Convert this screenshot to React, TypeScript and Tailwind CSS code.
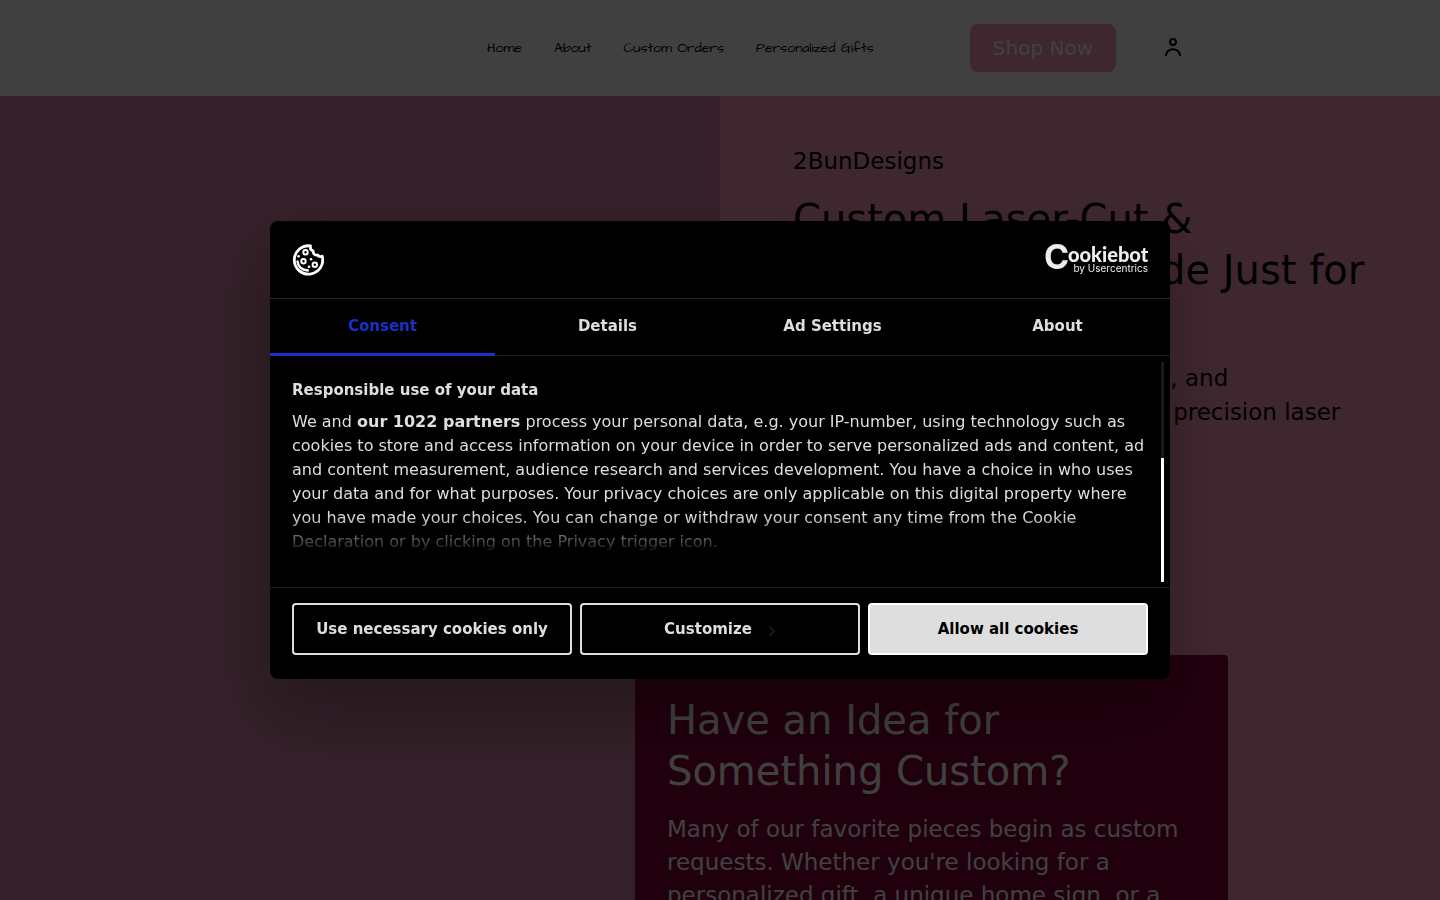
import { useState } from "react";

const navLinks = ["Home", "About", "Custom Orders", "Personalized Gifts"];
const tabs = ["Consent", "Details", "Ad Settings", "About"];

function UserIcon() {
  return (
    <svg className="h-6 w-6" viewBox="0 0 24 24" fill="none" stroke="currentColor" strokeWidth="2">
      <circle cx="12" cy="6" r="3" />
      <path d="M5 20c0-4 3.200-6.800 7-6.800s7 2.800 7 6.800" />
    </svg>
  );
}

function CookieIcon() {
  return (
    <svg className="h-8 w-8" viewBox="0 0 32 32" fill="none" stroke="#fff" strokeLinecap="round">
      <path
        d="M18.500 1.900A14.200 14.200 0 1 0 30.200 12.200c-1.700.9-3.600.3-4.400-1.200-2.700.6-5-1.300-4.600-3.900-2.200-.8-3.200-3-2.700-5.200Z"
        strokeWidth="2.800"
        strokeLinejoin="round"
      />
      <path d="M5.500 17.500c.6 5 4.600 8.600 10.400 9" strokeWidth="2.400" />
      <g strokeWidth="2">
        <circle cx="13.500" cy="8.300" r="2.200" />
        <circle cx="11.500" cy="17.200" r="2.200" />
        <circle cx="22.800" cy="20.800" r="2.200" />
      </g>
      <g fill="#fff" stroke="none">
        <circle cx="6.500" cy="12.300" r="1.300" />
        <circle cx="19" cy="15.200" r="1.300" />
        <circle cx="17" cy="22.800" r="1.300" />
      </g>
    </svg>
  );
}

function CookiebotLogo() {
  return (
    <svg className="h-8 w-[103px] overflow-visible" viewBox="0 0 103 32" fill="#eee" role="img" aria-label="Cookiebot by Usercentrics">
      <text x="-1" y="25">
        <tspan className="font-['Inter',sans-serif] text-[34px] font-bold">C</tspan>
        <tspan x="23" y="18" className="font-['Lato',sans-serif] text-[20px] font-black">
          ookiebot
        </tspan>
      </text>
      <text x="103" y="28" textAnchor="end" className="font-['Inter',sans-serif] text-[10px]">
        by Usercentrics
      </text>
    </svg>
  );
}

function SiteHeader() {
  return (
    <header className="flex h-24 items-center justify-end bg-white pr-[243px] text-black">
      <nav className="mr-24 flex gap-8 font-['Architects_Daughter',cursive] text-sm">
        {navLinks.map((label) => (
          <a key={label} href="#">
            {label}
          </a>
        ))}
      </nav>
      <a href="#" className="flex h-12 items-center rounded-lg bg-[#fc9cbc] px-[23px] text-xl text-white">
        Shop Now
      </a>
      <button type="button" aria-label="Account" className="ml-[33px] flex h-12 w-12 items-center justify-center">
        <UserIcon />
      </button>
    </header>
  );
}

function Hero() {
  return (
    <section>
      <div className="grid min-h-screen grid-cols-2">
        <div className="bg-[#cc80a0]" />
        <div className="bg-[#fc9cbc] pt-12 pl-[73px] text-black">
          <p className="text-[23px] leading-[34px]">2BunDesigns</p>
          <h1 className="mt-4 text-[40px] leading-[51px]">
            Custom Laser-Cut &amp;
            <br />
            Engraved Gifts Made Just for
            <br />
            You
          </h1>
          <p className="mt-[14px] text-[23px] leading-[34px]">
            Home decor, badges, ornaments, and
            <br />
            keepsakes, all hand-crafted with precision laser
          </p>
        </div>
      </div>
      <div className="-mt-[341px] flex justify-end pr-[212px]">
        <article className="w-[593px] rounded bg-[#800034] px-8 pt-10 pb-12 text-white">
          <h2 className="text-[40px] leading-[51px]">
            Have an Idea for
            <br />
            Something Custom?
          </h2>
          <p className="mt-4 text-[23px] leading-[33px]">
            Many of our favorite pieces begin as custom
            <br />
            requests. Whether you&apos;re looking for a
            <br />
            personalized gift, a unique home sign, or a
          </p>
        </article>
      </div>
    </section>
  );
}

function ConsentDialog() {
  const [active, setActive] = useState(0);

  return (
    <div
      role="dialog"
      aria-label="Cookie consent"
      className="w-full max-w-[900px] overflow-hidden rounded-lg bg-black text-[15px] text-[#dedede] shadow-[0_32px_68px_rgba(0,0,0,0.3)]"
    >
      <div className="flex h-[78px] items-center justify-between border-b border-[#262626] px-[22px]">
        <CookieIcon />
        <CookiebotLogo />
      </div>

      {/* Tabs */}
      <div role="tablist" className="grid h-[57px] grid-cols-4 border-b border-[#1c1c1c]">
        {tabs.map((tab, i) => (
          <button
            key={tab}
            type="button"
            role="tab"
            aria-selected={i === active}
            onClick={() => setActive(i)}
            className={
              i === active
                ? "-mb-px border-b-3 border-[#1831cb] font-bold text-[#1831cb]"
                : "-mb-px border-b-3 border-transparent font-bold"
            }
          >
            {tab}
          </button>
        ))}
      </div>

      {/* Scrollable copy */}
      <div className="relative flex h-[231px] justify-between pt-[6px] pr-[6px] pb-[5px] pl-[22px]">
        <div className="pt-4 leading-6">
          <h2 className="mb-2 font-bold">Responsible use of your data</h2>
          <p className="text-base">
            We and <strong>our 1022 partners</strong> process your personal data, e.g. your IP-number, using technology such as
            <br />
            cookies to store and access information on your device in order to serve personalized ads and content, ad
            <br />
            and content measurement, audience research and services development. You have a choice in who uses
            <br />
            your data and for what purposes. Your privacy choices are only applicable on this digital property where
            <br />
            you have made your choices. You can change or withdraw your consent any time from the Cookie
            <br />
            Declaration or by clicking on the Privacy trigger icon.
          </p>
        </div>
        <div className="flex w-[3px] flex-col justify-end bg-[#1a1a1a]">
          <div className="h-[124px] bg-white" />
        </div>
        <div className="pointer-events-none absolute right-4 bottom-8 left-0 h-10 bg-linear-to-t from-black to-transparent" />
      </div>

      <div className="grid grid-cols-3 gap-2 border-t border-[#1c1c1c] px-[22px] pt-[15px] pb-6">
        <button type="button" className="h-[52px] rounded border-2 border-[#dedede] font-bold">
          Use necessary cookies only
        </button>
        <button type="button" className="flex h-[52px] items-center justify-center gap-4 rounded border-2 border-[#dedede] font-bold">
          Customize
          <svg className="mt-1 h-3 w-2" viewBox="0 0 8 12" fill="none" stroke="#1a1a1a" strokeWidth="2">
            <path d="M1.500 1.500 6 6l-4.500 4.500" />
          </svg>
        </button>
        <button type="button" className="h-[52px] rounded border-2 border-white bg-[#dedede] font-bold text-black">
          Allow all cookies
        </button>
      </div>
    </div>
  );
}

export default function App() {
  return (
    <div className="h-screen overflow-hidden font-['DejaVu_Sans',sans-serif]">
      <SiteHeader />
      <Hero />
      <div className="fixed inset-0 flex items-center justify-center bg-black/75">
        <ConsentDialog />
      </div>
    </div>
  );
}
